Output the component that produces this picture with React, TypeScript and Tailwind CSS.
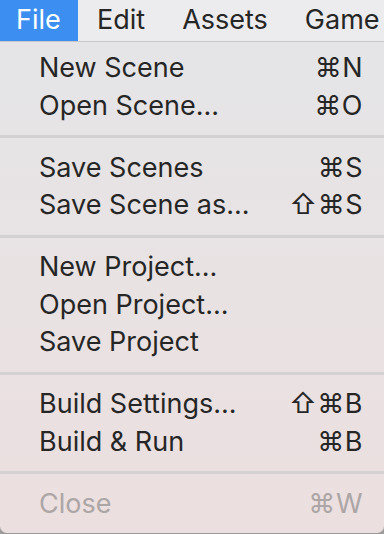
import React from "react";

type Item = { label: string; shortcut?: string; disabled?: boolean };

const groups: Item[][] = [
  [
    { label: "New Scene", shortcut: "⌘N" },
    { label: "Open Scene...", shortcut: "⌘O" },
  ],
  [
    { label: "Save Scenes", shortcut: "⌘S" },
    { label: "Save Scene as...", shortcut: "⇧⌘S" },
  ],
  [
    { label: "New Project..." },
    { label: "Open Project..." },
    { label: "Save Project" },
  ],
  [
    { label: "Build Settings...", shortcut: "⇧⌘B" },
    { label: "Build & Run", shortcut: "⌘B" },
  ],
  [{ label: "Close", shortcut: "⌘W", disabled: true }],
];

const font = { fontFamily: "Inter, 'DejaVu Sans', sans-serif" };

function MenuRow({ item }: { item: Item }) {
  return (
    <div
      className={`flex items-center justify-between h-[37.5px] pl-[39px] pr-[21px] text-[27px] leading-[37.5px] ${
        item.disabled ? "text-[#aca6a6]" : "text-[#262626]"
      }`}
    >
      <span>{item.label}</span>
      {item.shortcut && <span className="tracking-[0.5px]">{item.shortcut}</span>}
    </div>
  );
}

export default function App() {
  return (
    <div className="w-[384px] h-[534px] bg-[#9c9c9c] overflow-hidden" style={font}>
      {/* Menu bar */}
      <div className="flex h-[42px] bg-[#ececee] border-b border-[#c8c8c8] text-[27px] text-[#262626] whitespace-nowrap">
        <div className="flex items-center w-[78px] pl-[16px] bg-[#3c8ff0] text-white">File</div>
        <div className="flex items-center pl-[19px]">Edit</div>
        <div className="flex items-center pl-[37px]">Assets</div>
        <div className="flex items-center pl-[37px]">Game</div>
      </div>

      {/* Dropdown */}
      <div className="h-[491px] bg-gradient-to-b from-[#e5e5e7] to-[#ecdfdf] rounded-b-[7px] pt-[7px]">
        {groups.map((group, gi) => (
          <div key={gi}>
            {gi > 0 && <div className="h-[3px] mt-[11px] mb-[10.5px] bg-[#d3d1d2]" />}
            {group.map((item) => (
              <MenuRow key={item.label} item={item} />
            ))}
          </div>
        ))}
      </div>
    </div>
  );
}
